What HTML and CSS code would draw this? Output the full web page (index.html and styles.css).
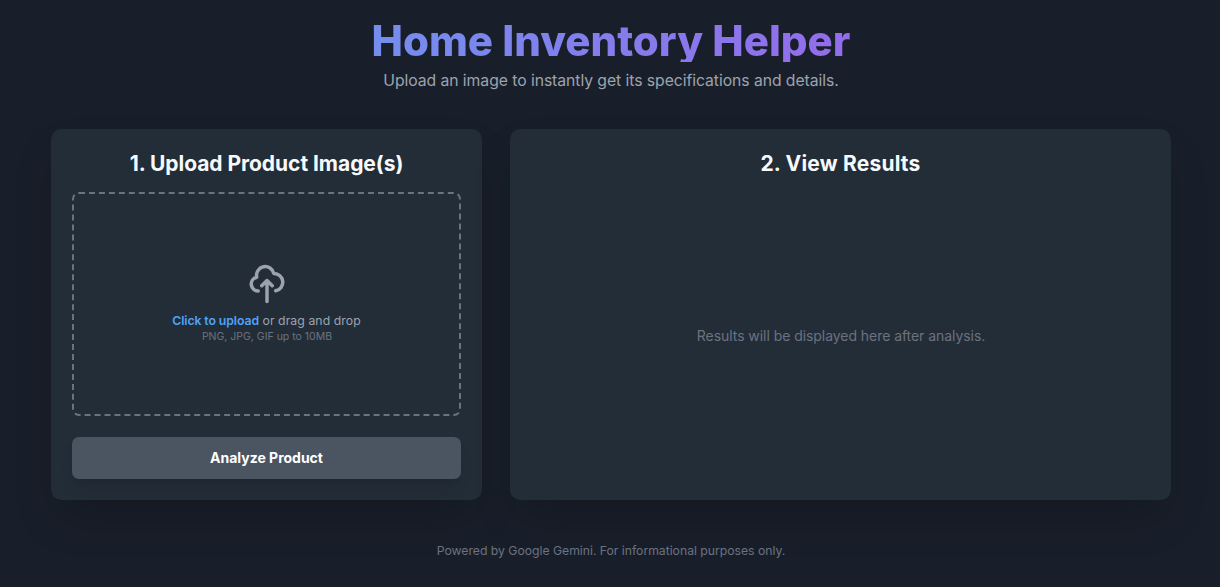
FILE: index.html
```html
<!DOCTYPE html>
<html lang="en">
<head>
<meta charset="utf-8">
<title>Home Inventory Helper</title>
<link rel="stylesheet" href="styles.css">
</head>
<body>
<div class="page">
  <header class="header">
    <h1 class="title">Home Inventory Helper</h1>
    <p class="subtitle">Upload an image to instantly get its specifications and details.</p>
  </header>
  <main class="grid">
    <section class="card">
      <h2 class="card-title">1. Upload Product Image(s)</h2>
      <div class="dropzone">
        <svg class="upload-icon" viewBox="0 0 24 24" fill="none" stroke="currentColor" stroke-width="2" stroke-linecap="round" stroke-linejoin="round"><path d="M7 16a4 4 0 0 1-.88-7.903A5 5 0 1 1 15.9 6H16a5 5 0 0 1 1 9.9M15 13l-3-3m0 0l-3 3m3-3v12"/></svg>
        <p class="prompt"><span class="link">Click to upload</span> or drag and drop</p>
        <p class="hint">PNG, JPG, GIF up to 10MB</p>
      </div>
      <button class="button">Analyze Product</button>
    </section>
    <section class="card">
      <h2 class="card-title results-title">2. View Results</h2>
      <div class="results"><p>Results will be displayed here after analysis.</p></div>
    </section>
  </main>
  <footer class="footer">Powered by Google Gemini. For informational purposes only.</footer>
</div>
</body>
</html>
```
FILE: styles.css
```css
* { box-sizing: border-box; margin: 0; }
html { font-size: 14px; }
body {
  height: 587px;
  overflow: hidden;
  background: #191f2a;
  font-family: Inter, "Liberation Sans", sans-serif;
  line-height: 1.5;
}
.page { width: 1120px; margin-left: 51px; padding-top: 20px; }
.header { text-align: center; margin-bottom: 35px; }
.title {
  font-size: 42px;
  line-height: 42px;
  font-weight: 800;
  color: transparent;
  background: linear-gradient(to right, #60a5f0, #a855e8);
  -webkit-background-clip: text;
  background-clip: text;
}
.subtitle { margin-top: 7px; font-size: 15.75px; line-height: 24.5px; letter-spacing: -.065px; color: #9ca3af; }
.grid { display: grid; grid-template-columns: 431px 661px; gap: 28px; }
.card {
  display: flex;
  flex-direction: column;
  height: 371px;
  padding: 21px;
  border-radius: 10.5px;
  background: #232d38;
  box-shadow: 0 22px 44px -10px rgba(0, 0, 0, .25);
}
.card-title {
  margin-bottom: 14px;
  font-size: 21px;
  line-height: 28px;
  font-weight: 700;
  letter-spacing: -.04px;
  text-align: center;
  color: #f7fafc;
}
.results-title { letter-spacing: .2px; }
.dropzone {
  display: flex;
  flex-direction: column;
  align-items: center;
  justify-content: center;
  height: 224px;
  border: 2px dashed #6b7280;
  border-radius: 7px;
}
.upload-icon { width: 42px; height: 42px; color: #9ca3af; }
.prompt { margin-top: 7px; font-size: 12.25px; line-height: 17.5px; letter-spacing: .07px; color: #9ca3af; }
.link { font-weight: 600; letter-spacing: -.08px; color: #4fa3f7; }
.hint { padding-left: 1px; font-size: 10.5px; line-height: 14px; color: #6b7280; }
.button {
  height: 42px;
  margin-top: 21px;
  border: 0;
  border-radius: 7px;
  background: #4b5561;
  font-family: inherit;
  font-size: 14px;
  font-weight: 700;
  color: #fff;
  box-shadow: 0 10px 15px -3px rgba(0, 0, 0, .1), 0 4px 6px -2px rgba(0, 0, 0, .05);
}
.results {
  flex: 1;
  display: flex;
  align-items: center;
  justify-content: center;
  padding-left: 1px;
  font-size: 14px;
  line-height: 21px;
  letter-spacing: -.055px;
  color: #6b7280;
}
.footer { margin-top: 42px; font-size: 12.25px; line-height: 17.5px; letter-spacing: -.035px; text-align: center; color: #6b7280; }
```
